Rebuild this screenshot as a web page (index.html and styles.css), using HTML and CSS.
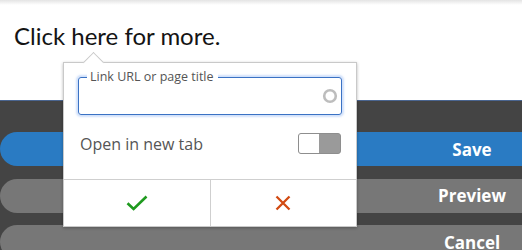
FILE: index.html
```html
<!DOCTYPE html>
<html>
<head>
<meta charset="utf-8">
<link rel="stylesheet" href="styles.css">
</head>
<body>
<div class="page">
  <div class="editor">
    <p class="content">Click here for more.</p>
  </div>
  <div class="toolbar">
    <div class="btn btn-save"><span class="label">Save</span></div>
    <div class="btn btn-gray"><span class="label">Preview</span></div>
    <div class="btn btn-gray"><span class="label">Cancel</span></div>
  </div>
  <div class="popup">
    <div class="arrow"></div>
    <div class="body">
      <div class="field">
        <span class="legend">Link URL or page title</span>
        <svg class="spinner" width="16" height="16" viewBox="0 0 16 16"><circle cx="8" cy="8" r="5.8" fill="none" stroke="#bdbdbd" stroke-width="2.6"/></svg>
      </div>
      <div class="row">
        <span class="row-label">Open in new tab</span>
        <div class="toggle"><div class="knob"></div></div>
      </div>
    </div>
    <div class="actions">
      <div class="action">
        <svg width="22" height="16" viewBox="0 0 22 16"><path d="M1.5 8.2 L7.6 14 L20.5 1.5" fill="none" stroke="#1f9a1f" stroke-width="2.6"/></svg>
      </div>
      <div class="action action-sep">
        <svg width="16" height="16" viewBox="0 0 16 16"><path d="M1.5 1.5 L14.5 14.5 M14.5 1.5 L1.5 14.5" fill="none" stroke="#d24a12" stroke-width="2.3"/></svg>
      </div>
    </div>
  </div>
</div>
</body>
</html>
```
FILE: styles.css
```css
html, body {
  margin: 0;
  padding: 0;
}
.page {
  position: relative;
  width: 522px;
  height: 250px;
  overflow: hidden;
  font-family: "Open Sans", "Noto Sans", sans-serif;
}
.editor {
  height: 100px;
  box-sizing: border-box;
  padding: 22px 0 0 14px;
  background: linear-gradient(#e4e4e4, #ffffff 5px);
}
.content {
  margin: 0;
  font-family: Lato, sans-serif;
  font-size: 24px;
  line-height: 28px;
  color: #141414;
}
.toolbar {
  height: 150px;
  box-sizing: border-box;
  background: #444444;
  border-top: 1px solid #4a6590;
  padding-top: 31px;
  display: flex;
  flex-direction: column;
  gap: 12.5px;
}
.btn {
  height: 34px;
  border-radius: 17px 0 0 17px;
  display: flex;
  justify-content: flex-end;
  align-items: center;
  flex-shrink: 0;
}
.btn-save {
  background: #2a7bc3;
}
.btn-gray {
  background: #777777;
}
.label {
  width: 100px;
  text-align: center;
  color: #ffffff;
  font-weight: 700;
  font-size: 17px;
}
.popup {
  position: absolute;
  left: 63px;
  top: 62px;
  width: 294px;
  height: 165px;
  box-sizing: border-box;
  background: #ffffff;
  border: 1px solid #c9c9c9;
  box-shadow: 0 1px 3px rgba(0, 0, 0, 0.28);
  display: flex;
  flex-direction: column;
}
.arrow {
  position: absolute;
  left: 21.5px;
  top: -8.5px;
  width: 15px;
  height: 15px;
  background: #ffffff;
  border-top: 1px solid #c9c9c9;
  border-left: 1px solid #c9c9c9;
  box-sizing: border-box;
  transform: rotate(45deg);
}
.body {
  padding: 14px 14px 0 14px;
  border-bottom: 1px solid #cfcfcf;
  height: 117px;
  box-sizing: border-box;
}
.field {
  position: relative;
  height: 38px;
  box-sizing: border-box;
  border: 1px solid #3b72c4;
  border-radius: 3px;
  box-shadow: 0 0 2px 2px rgba(120, 165, 240, 0.35);
  display: flex;
  align-items: center;
  justify-content: flex-end;
  padding-right: 3px;
}
.legend {
  position: absolute;
  left: 8px;
  top: -9px;
  padding: 0 4px 0 3px;
  background: #ffffff;
  font-size: 12.5px;
  line-height: 15px;
  color: #555555;
}
.spinner {
  display: block;
}
.row {
  margin-top: 18px;
  display: flex;
  align-items: center;
  justify-content: space-between;
  height: 21px;
  padding-left: 2px;
}
.row-label {
  font-size: 16px;
  color: #555555;
}
.toggle {
  width: 43px;
  height: 21px;
  box-sizing: border-box;
  border: 1px solid #8e8e8e;
  border-radius: 3px;
  background: #9a9a9a;
  overflow: hidden;
  margin-right: 1px;
}
.knob {
  width: 20px;
  height: 100%;
  background: #ffffff;
}
.actions {
  flex: 1;
  display: flex;
}
.action {
  flex: 1;
  display: flex;
  align-items: center;
  justify-content: center;
}
.action-sep {
  border-left: 1px solid #cfcfcf;
}
```
